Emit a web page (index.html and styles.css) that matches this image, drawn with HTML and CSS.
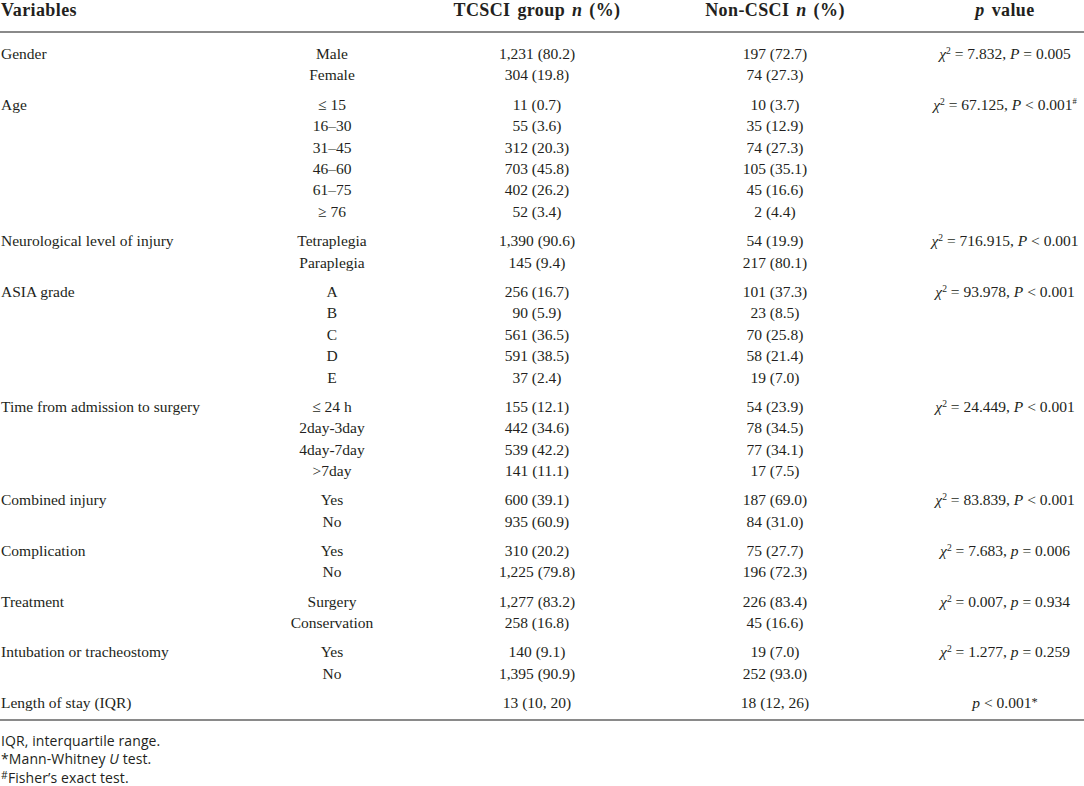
FILE: index.html
```html
<!DOCTYPE html>
<html lang="en">
<head>
<meta charset="utf-8">
<title>Table</title>
<link rel="stylesheet" href="styles.css">
</head>
<body>
<table class="data">
  <colgroup>
    <col class="c1"><col class="c2"><col class="c3"><col class="c4"><col class="c5">
  </colgroup>
  <thead>
    <tr>
      <th class="var">Variables</th>
      <th></th>
      <th>TCSCI group <i>n</i> (%)</th>
      <th>Non-CSCI <i>n</i> (%)</th>
      <th class="pv"><i>p</i> value</th>
    </tr>
  </thead>
  <tbody class="grp">
    <tr><td class="var">Gender</td><td>Male</td><td>1,231 (80.2)</td><td>197 (72.7)</td><td class="pv"><i>χ</i><sup>2</sup> = 7.832, <i>P</i> = 0.005</td></tr>
    <tr><td></td><td>Female</td><td>304 (19.8)</td><td>74 (27.3)</td><td class="pv"></td></tr>
  </tbody>
  <tbody class="grp">
    <tr><td class="var">Age</td><td>≤ 15</td><td>11 (0.7)</td><td>10 (3.7)</td><td class="pv"><i>χ</i><sup>2</sup> = 67.125, <i>P</i> &lt; 0.001<sup class="hash">#</sup></td></tr>
    <tr><td></td><td>16–30</td><td>55 (3.6)</td><td>35 (12.9)</td><td class="pv"></td></tr>
    <tr><td></td><td>31–45</td><td>312 (20.3)</td><td>74 (27.3)</td><td class="pv"></td></tr>
    <tr><td></td><td>46–60</td><td>703 (45.8)</td><td>105 (35.1)</td><td class="pv"></td></tr>
    <tr><td></td><td>61–75</td><td>402 (26.2)</td><td>45 (16.6)</td><td class="pv"></td></tr>
    <tr><td></td><td>≥ 76</td><td>52 (3.4)</td><td>2 (4.4)</td><td class="pv"></td></tr>
  </tbody>
  <tbody class="grp">
    <tr><td class="var">Neurological level of injury</td><td>Tetraplegia</td><td>1,390 (90.6)</td><td>54 (19.9)</td><td class="pv"><i>χ</i><sup>2</sup> = 716.915, <i>P</i> &lt; 0.001</td></tr>
    <tr><td></td><td>Paraplegia</td><td>145 (9.4)</td><td>217 (80.1)</td><td class="pv"></td></tr>
  </tbody>
  <tbody class="grp">
    <tr><td class="var">ASIA grade</td><td>A</td><td>256 (16.7)</td><td>101 (37.3)</td><td class="pv"><i>χ</i><sup>2</sup> = 93.978, <i>P</i> &lt; 0.001</td></tr>
    <tr><td></td><td>B</td><td>90 (5.9)</td><td>23 (8.5)</td><td class="pv"></td></tr>
    <tr><td></td><td>C</td><td>561 (36.5)</td><td>70 (25.8)</td><td class="pv"></td></tr>
    <tr><td></td><td>D</td><td>591 (38.5)</td><td>58 (21.4)</td><td class="pv"></td></tr>
    <tr><td></td><td>E</td><td>37 (2.4)</td><td>19 (7.0)</td><td class="pv"></td></tr>
  </tbody>
  <tbody class="grp">
    <tr><td class="var">Time from admission to surgery</td><td>≤ 24 h</td><td>155 (12.1)</td><td>54 (23.9)</td><td class="pv"><i>χ</i><sup>2</sup> = 24.449, <i>P</i> &lt; 0.001</td></tr>
    <tr><td></td><td>2day-3day</td><td>442 (34.6)</td><td>78 (34.5)</td><td class="pv"></td></tr>
    <tr><td></td><td>4day-7day</td><td>539 (42.2)</td><td>77 (34.1)</td><td class="pv"></td></tr>
    <tr><td></td><td>&gt;7day</td><td>141 (11.1)</td><td>17 (7.5)</td><td class="pv"></td></tr>
  </tbody>
  <tbody class="grp">
    <tr><td class="var">Combined injury</td><td>Yes</td><td>600 (39.1)</td><td>187 (69.0)</td><td class="pv"><i>χ</i><sup>2</sup> = 83.839, <i>P</i> &lt; 0.001</td></tr>
    <tr><td></td><td>No</td><td>935 (60.9)</td><td>84 (31.0)</td><td class="pv"></td></tr>
  </tbody>
  <tbody class="grp">
    <tr><td class="var">Complication</td><td>Yes</td><td>310 (20.2)</td><td>75 (27.7)</td><td class="pv"><i>χ</i><sup>2</sup> = 7.683, <i>p</i> = 0.006</td></tr>
    <tr><td></td><td>No</td><td>1,225 (79.8)</td><td>196 (72.3)</td><td class="pv"></td></tr>
  </tbody>
  <tbody class="grp">
    <tr><td class="var">Treatment</td><td>Surgery</td><td>1,277 (83.2)</td><td>226 (83.4)</td><td class="pv"><i>χ</i><sup>2</sup> = 0.007, <i>p</i> = 0.934</td></tr>
    <tr><td></td><td>Conservation</td><td>258 (16.8)</td><td>45 (16.6)</td><td class="pv"></td></tr>
  </tbody>
  <tbody class="grp">
    <tr><td class="var">Intubation or tracheostomy</td><td>Yes</td><td>140 (9.1)</td><td>19 (7.0)</td><td class="pv"><i>χ</i><sup>2</sup> = 1.277, <i>p</i> = 0.259</td></tr>
    <tr><td></td><td>No</td><td>1,395 (90.9)</td><td>252 (93.0)</td><td class="pv"></td></tr>
  </tbody>
  <tbody class="grp last">
    <tr><td class="var">Length of stay (IQR)</td><td></td><td>13 (10, 20)</td><td>18 (12, 26)</td><td class="pv"><i>p</i> &lt; 0.001<sup class="ast">*</sup></td></tr>
  </tbody>
</table>
<div class="notes">
  <p>IQR, interquartile range.</p>
  <p>*Mann-Whitney <i>U</i> test.</p>
  <p><sup class="fn">#</sup>Fisher’s exact test.</p>
</div>
</body>
</html>
```

FILE: styles.css
```css
html, body {
  margin: 0;
  padding: 0;
  background: #ffffff;
}

body {
  color: #231f20;
  font-family: "Liberation Serif", "Times New Roman", serif;
}

.data {
  width: 1084px;
  table-layout: fixed;
  border-collapse: collapse;
  border-bottom: 2px solid #8a8a8a;
}

.c1 { width: 250px; }
.c2 { width: 164px; }
.c3 { width: 246px; }
.c4 { width: 230px; }
.c5 { width: 194px; }

.data th {
  font-size: 18px;
  font-weight: bold;
  line-height: 20px;
  letter-spacing: 0.4px;
  word-spacing: 2px;
  padding: 0 0 11px;
  text-align: center;
  border-bottom: 2px solid #8a8a8a;
  white-space: nowrap;
}

.data td {
  font-size: 15.5px;
  line-height: 21.45px;
  padding: 0;
  text-align: center;
  white-space: nowrap;
}

.data th.var,
.data td.var {
  text-align: left;
  padding-left: 1px;
}

.data th.pv,
.data td.pv {
  padding-left: 36px;
}

.grp tr:first-child td {
  padding-top: 7.75px;
}

.grp:first-of-type tr:first-child td {
  padding-top: 10px;
}

.grp.last tr:last-child td {
  padding-bottom: 6px;
}

sup {
  font-size: 0.62em;
  line-height: 0;
  vertical-align: 0.5em;
}

sup.hash {
  font-size: 0.55em;
  vertical-align: 0.7em;
}

sup.ast {
  font-size: 0.8em;
  vertical-align: 0.15em;
}

.notes {
  padding-top: 10.5px;
  font-family: "Open Sans", "DejaVu Sans", sans-serif;
  font-size: 14px;
  line-height: 18.5px;
  letter-spacing: 0.1px;
  color: #231f20;
}

.notes p {
  margin: 0;
  padding-left: 1px;
}

sup.fn {
  font-size: 0.75em;
  vertical-align: 0.4em;
}
```
